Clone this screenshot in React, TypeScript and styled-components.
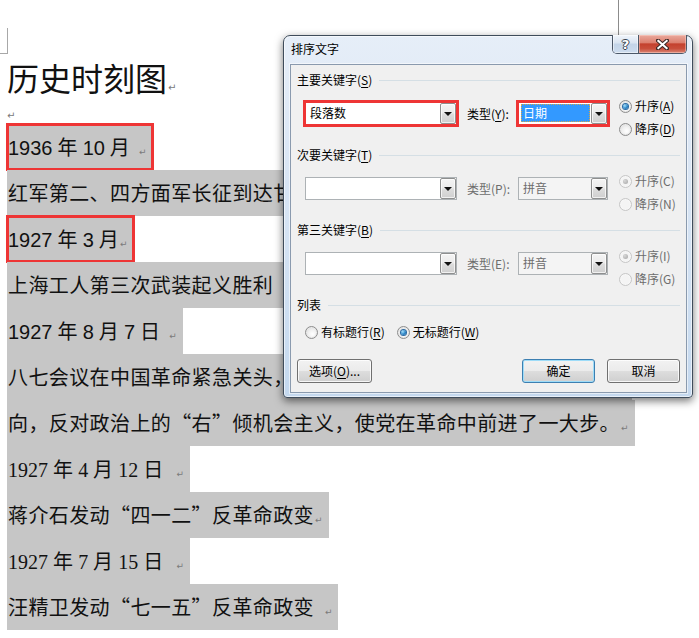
import React from 'react';
import styled, { createGlobalStyle, css } from 'styled-components';

const GlobalStyle = createGlobalStyle`
  html, body { margin: 0; padding: 0; background: #fff; }
  body {
    font-family: "Noto Sans CJK SC", sans-serif;
    text-autospace: no-autospace;
    text-spacing-trim: space-all;
  }
  * { box-sizing: border-box; }
`;

const Page = styled.div`
  position: relative;
  width: 699px;
  height: 638px;
  overflow: hidden;
  background: #fff;
`;

/* ---------- document ---------- */
const Doc = styled.div`
  display: flex;
  flex-direction: column;
  align-items: flex-start;
  font-family: "Noto Sans CJK SC", sans-serif;
  color: #111;
`;

const MarginMarks = styled.div`
  display: flex;
  justify-content: space-between;
  align-self: stretch;
  height: 54px;
  padding-right: 80px;
`;

const CornerMark = styled.div`
  align-self: flex-end;
  width: 8px;
  height: 26px;
  border-right: 1px solid #a8a8a8;
  border-bottom: 1px solid #a8a8a8;
`;

const EdgeMark = styled.div`
  width: 1px;
  background: #8c8c8c;
`;

const Title = styled.h1`
  margin: 0 0 0 7px;
  font-weight: normal;
  font-size: 32px;
  line-height: 46px;
  height: 46px;
  white-space: nowrap;
`;

const EmptyLine = styled.div`
  height: 24px;
  line-height: 24px;
  margin-left: 7px;
`;

const Para = styled.div<{ $marked?: boolean; $reach?: number }>`
  height: 46px;
  line-height: 46px;
  margin-left: 7px;
  padding: 0 6px 0 1px;
  background: #c6c6c6;
  font-size: 20px;
  letter-spacing: 0.4px;
  white-space: nowrap;
  ${(p) =>
    p.$reach &&
    css`
      min-width: ${p.$reach}px;
    `}
  ${(p) =>
    p.$marked &&
    css`
      outline: 3px solid #ee3535;
      outline-offset: -2px;
    `}
`;

const Num = styled.span<{ $serif?: boolean }>`
  letter-spacing: 0;
  font-family: ${(p) =>
    p.$serif ? '"Liberation Serif", serif' : '"Liberation Sans Narrow", "Liberation Sans", sans-serif'};
`;

const ReturnMark = styled.span<{ $gap?: number; $size?: number }>`
  font-family: "DejaVu Sans", sans-serif;
  font-size: ${(p) => p.$size ?? 9}px;
  color: #7a7a7a;
  letter-spacing: 0;
  margin-left: ${(p) => p.$gap ?? 1}px;
`;

/* ---------- dialog window ---------- */
const Window = styled.div`
  position: absolute;
  left: 283px;
  top: 35px;
  width: 410px;
  height: 363px;
  display: flex;
  flex-direction: column;
  padding: 0 5px 4px 6px;
  border: 1px solid #3f4c5b;
  border-radius: 7px 7px 4px 4px;
  background: linear-gradient(to bottom, #e6eef8 0%, #dce7f5 30%, #d0e0f2 70%, #c4d8ee 100%);
  box-shadow: inset 0 0 0 1px rgba(255, 255, 255, 0.6), 0 3px 9px rgba(0, 0, 0, 0.55);
  font-family: "Noto Sans CJK SC", sans-serif;
  font-size: 12px;
  color: #000;
`;

const TitleBar = styled.div`
  display: flex;
  flex: none;
  height: 28px;
`;

const TitleText = styled.span`
  padding: 5px 0 0 1px;
  font-size: 12px;
  line-height: 16px;
  color: #000;
`;

const CaptionButtons = styled.div`
  display: flex;
  margin: -1px 0 0 auto;
  height: 19px;
  border: 1px solid #4c5868;
  border-top: none;
  border-radius: 0 0 5px 5px;
  overflow: hidden;
`;

const HelpButton = styled.div`
  display: flex;
  align-items: center;
  justify-content: center;
  width: 26px;
  border-right: 1px solid #4c5868;
  background: linear-gradient(to bottom, #f1f5fb 0%, #d9e4f1 45%, #c3d4e8 50%, #cddcee 100%);
  box-shadow: inset 0 0 0 1px rgba(255, 255, 255, 0.5);
  font-family: "DejaVu Sans", sans-serif;
  font-weight: bold;
  font-size: 13px;
  color: #fff;
  text-shadow: -1px 0 #3a4350, 1px 0 #3a4350, 0 -1px #3a4350, 0 1px #3a4350;
`;

const CloseButton = styled.div`
  display: flex;
  align-items: center;
  justify-content: center;
  width: 47px;
  background: linear-gradient(to bottom, #eaaa9d 0%, #dc8070 42%, #c4412e 50%, #c84e3b 75%, #da8674 100%);
  box-shadow: inset 0 0 0 1px rgba(255, 220, 210, 0.45);
`;

const Client = styled.div`
  flex: 1;
  display: flex;
  flex-direction: column;
  padding: 7px 6px 0 6px;
  border: 1px solid #8a9aae;
  background: #f0f0f0;
  box-shadow: 0 0 0 1px rgba(255, 255, 255, 0.55);
`;

const Sections = styled.div`
  display: flex;
  flex-direction: column;
  gap: 10px;
`;

const Section = styled.div`
  display: flex;
  flex-direction: column;
`;

const Head = styled.div`
  display: flex;
  align-items: center;
  gap: 7px;
  height: 16px;
  line-height: 16px;
  white-space: nowrap;
  &::after {
    content: '';
    flex: 1;
    height: 1px;
    background: #d5dfe5;
  }
`;

const Key = styled.span`
  text-decoration: underline;
  text-underline-offset: 2px;
`;

const KeyRow = styled.div`
  display: flex;
  align-items: flex-start;
  margin: 10px 0 0 8px;
`;

const Combo = styled.div<{ $w: number; $disabled?: boolean; $list?: boolean; $marked?: boolean }>`
  display: flex;
  width: ${(p) => p.$w}px;
  height: 23px;
  margin-top: 4px;
  border: 1px solid ${(p) => (p.$disabled ? '#adb2b5' : '#abadb3')};
  background: ${(p) => (p.$list && p.$disabled ? '#f4f4f4' : '#fff')};
  color: ${(p) => (p.$disabled ? '#6d6d6d' : '#000')};
  ${(p) =>
    p.$marked &&
    css`
      outline: 3px solid #ee3535;
      outline-offset: -1px;
    `}
`;

const ComboText = styled.div<{ $selected?: boolean }>`
  flex: 1;
  margin: 1px 1px 2px 2px;
  padding-left: 2px;
  line-height: 18px;
  white-space: nowrap;
  ${(p) =>
    p.$selected &&
    css`
      background: #3399ff;
      color: #fff;
      border: 1px dotted #d9a646;
      padding-left: 1px;
      line-height: 16px;
    `}
`;

const DropButton = styled.div`
  display: flex;
  align-items: center;
  justify-content: center;
  width: 16px;
  border: 1px solid #8e8f8f;
  border-radius: 2px;
  background: linear-gradient(to bottom, #f4f4f4 0%, #ebebeb 48%, #dddddd 52%, #cfcfcf 100%);
  box-shadow: inset 0 0 0 1px rgba(255, 255, 255, 0.7);
  &::after {
    content: '';
    border-left: 4px solid transparent;
    border-right: 4px solid transparent;
    border-top: 4px solid #111;
    margin-top: 1px;
  }
`;

const TypeLabel = styled.span<{ $disabled?: boolean }>`
  width: 61px;
  padding-left: 10px;
  margin-top: 4px;
  line-height: 23px;
  white-space: nowrap;
  color: ${(p) => (p.$disabled ? '#6d6d6d' : '#000')};
`;

const RadioCol = styled.div`
  display: flex;
  flex-direction: column;
  gap: 7px;
  margin-left: 11px;
`;

const RadioRow = styled.div`
  display: flex;
  gap: 12px;
  margin: 11px 0 0 8px;
`;

const RadioItem = styled.div<{ $disabled?: boolean }>`
  display: flex;
  align-items: center;
  gap: 3px;
  height: 16px;
  line-height: 16px;
  white-space: nowrap;
  color: ${(p) => (p.$disabled ? '#6d6d6d' : '#000')};
`;

const RadioCircle = styled.span<{ $checked?: boolean; $disabled?: boolean }>`
  display: flex;
  align-items: center;
  justify-content: center;
  flex: none;
  width: 13px;
  height: 13px;
  border-radius: 50%;
  border: 1px solid ${(p) => (p.$disabled ? '#c6c6c6' : '#8d8d8d')};
  background: ${(p) =>
    p.$disabled
      ? '#f4f4f4'
      : 'radial-gradient(circle at 60% 65%, #ffffff 0%, #f0f0f0 45%, #d4d4d4 100%)'};
  box-shadow: inset 0 0 0 1px ${(p) => (p.$disabled ? '#f7f7f7' : '#e9e9e9')};
  &::after {
    content: '';
    width: 5px;
    height: 5px;
    border-radius: 50%;
    background: ${(p) =>
      !p.$checked
        ? 'transparent'
        : p.$disabled
        ? 'radial-gradient(circle at 35% 35%, #d8d8d8, #a4a4a4)'
        : 'radial-gradient(circle at 35% 35%, #a6e0fb 0%, #2b86c9 55%, #0d4f8d 100%)'};
    box-shadow: ${(p) => (p.$checked && !p.$disabled ? '0 0 0 1px #2a6aa3' : 'none')};
  }
`;

const ButtonRow = styled.div`
  display: flex;
  align-items: center;
  margin-top: 19px;
`;

const ButtonGroup = styled.div`
  display: flex;
  gap: 12px;
  margin-left: auto;
`;

const PushButton = styled.div<{ $w: number; $default?: boolean }>`
  display: flex;
  align-items: center;
  justify-content: center;
  width: ${(p) => p.$w}px;
  height: 24px;
  border: 1px solid ${(p) => (p.$default ? '#3c7fb1' : '#707070')};
  border-radius: 3px;
  background: linear-gradient(to bottom, #f2f2f2 0%, #ebebeb 48%, #dddddd 52%, #cfcfcf 100%);
  box-shadow: inset 0 0 0 1px ${(p) => (p.$default ? '#9edcf8' : 'rgba(255,255,255,0.8)')};
  font-size: 12px;
  line-height: 16px;
  white-space: nowrap;
  color: #000;
`;

type KeySection = {
  head: React.ReactNode;
  typeLabel: React.ReactNode;
  value: string;
  asc: React.ReactNode;
  desc: React.ReactNode;
  disabled?: boolean;
  primary?: boolean;
};

const keySections: KeySection[] = [
  {
    head: <>主要关键字(<Key>S</Key>)</>,
    typeLabel: <>类型(<Key>Y</Key>):</>,
    value: '日期',
    asc: <>升序(<Key>A</Key>)</>,
    desc: <>降序(<Key>D</Key>)</>,
    primary: true,
  },
  {
    head: <>次要关键字(<Key>T</Key>)</>,
    typeLabel: <>类型(P):</>,
    value: '拼音',
    asc: <>升序(C)</>,
    desc: <>降序(N)</>,
    disabled: true,
  },
  {
    head: <>第三关键字(<Key>B</Key>)</>,
    typeLabel: <>类型(E):</>,
    value: '拼音',
    asc: <>升序(I)</>,
    desc: <>降序(G)</>,
    disabled: true,
  },
];

const CloseGlyph = () => (
  <svg width="13" height="11" viewBox="0 0 13 11">
    <path d="M2 1.5 L11 9.5 M11 1.5 L2 9.5" stroke="#3b2a28" strokeWidth="4" strokeLinecap="square" />
    <path d="M2.3 1.8 L10.7 9.2 M10.7 1.8 L2.3 9.2" stroke="#ffffff" strokeWidth="2" strokeLinecap="square" />
  </svg>
);

export default function App() {
  return (
    <Page>
      <GlobalStyle />
      <Doc>
        <MarginMarks>
          <CornerMark />
          <EdgeMark />
        </MarginMarks>
        <Title>
          历史时刻图<ReturnMark $size={10}>↵</ReturnMark>
        </Title>
        <EmptyLine>
          <ReturnMark $gap={0} $size={10}>↵</ReturnMark>
        </EmptyLine>
        <Para $marked>
          <Num>1936</Num> 年 <Num>10</Num> 月 <ReturnMark $gap={4}>↵</ReturnMark>
        </Para>
        <Para $reach={400}>红军第二、四方面军长征到达甘肃</Para>
        <Para $marked>
          <Num>1927</Num> 年 <Num>3</Num> 月<ReturnMark>↵</ReturnMark>
        </Para>
        <Para $reach={320}>上海工人第三次武装起义胜利</Para>
        <Para>
          <Num>1927</Num> 年 <Num>8</Num> 月 <Num>7</Num> 日 <ReturnMark $gap={4}>↵</ReturnMark>
        </Para>
        <Para $reach={625}>八七会议在中国革命紧急关头，</Para>
        <Para>
          向，反对政治上的“右”倾机会主义，使党在革命中前进了一大步。<ReturnMark>↵</ReturnMark>
        </Para>
        <Para>
          <Num $serif>1927</Num> 年 <Num $serif>4</Num> 月 <Num $serif>12</Num> 日 <ReturnMark $gap={8}>↵</ReturnMark>
        </Para>
        <Para>
          蒋介石发动“四一二”反革命政变<ReturnMark>↵</ReturnMark>
        </Para>
        <Para>
          <Num $serif>1927</Num> 年 <Num $serif>7</Num> 月 <Num $serif>15</Num> 日 <ReturnMark $gap={8}>↵</ReturnMark>
        </Para>
        <Para>
          汪精卫发动“七一五”反革命政变 <ReturnMark $gap={6}>↵</ReturnMark>
        </Para>
      </Doc>

      <Window>
        <TitleBar>
          <TitleText>排序文字</TitleText>
          <CaptionButtons>
            <HelpButton>?</HelpButton>
            <CloseButton>
              <CloseGlyph />
            </CloseButton>
          </CaptionButtons>
        </TitleBar>
        <Client>
          <Sections>
            {keySections.map((s, i) => (
              <Section key={i}>
                <Head>
                  <span>{s.head}</span>
                </Head>
                <KeyRow>
                  <Combo $w={152} $disabled={s.disabled} $marked={s.primary}>
                    <ComboText>{s.primary ? '段落数' : ''}</ComboText>
                    <DropButton />
                  </Combo>
                  <TypeLabel $disabled={s.disabled}>{s.typeLabel}</TypeLabel>
                  <Combo $w={90} $list $disabled={s.disabled} $marked={s.primary}>
                    <ComboText $selected={s.primary}>{s.value}</ComboText>
                    <DropButton />
                  </Combo>
                  <RadioCol>
                    <RadioItem $disabled={s.disabled}>
                      <RadioCircle $checked $disabled={s.disabled} />
                      <span>{s.asc}</span>
                    </RadioItem>
                    <RadioItem $disabled={s.disabled}>
                      <RadioCircle $disabled={s.disabled} />
                      <span>{s.desc}</span>
                    </RadioItem>
                  </RadioCol>
                </KeyRow>
              </Section>
            ))}
            <Section>
              <Head>
                <span>列表</span>
              </Head>
              <RadioRow>
                <RadioItem>
                  <RadioCircle />
                  <span>有标题行(<Key>R</Key>)</span>
                </RadioItem>
                <RadioItem>
                  <RadioCircle $checked />
                  <span>无标题行(<Key>W</Key>)</span>
                </RadioItem>
              </RadioRow>
            </Section>
          </Sections>
          <ButtonRow>
            <PushButton $w={75}>
              <span>选项(<Key>O</Key>)...</span>
            </PushButton>
            <ButtonGroup>
              <PushButton $w={73} $default>
                确定
              </PushButton>
              <PushButton $w={73}>取消</PushButton>
            </ButtonGroup>
          </ButtonRow>
        </Client>
      </Window>
    </Page>
  );
}
